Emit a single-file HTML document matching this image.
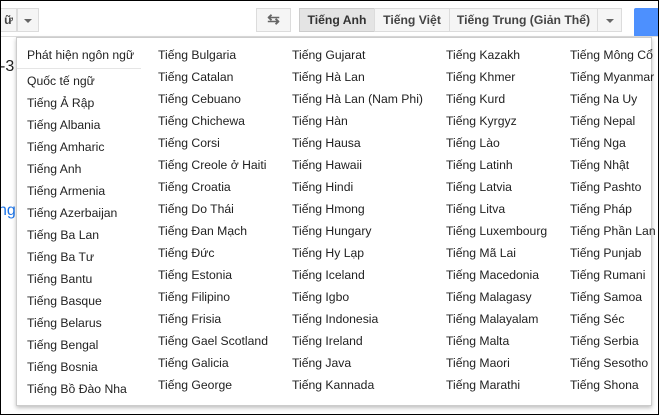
<!DOCTYPE html><html><head><style>
body{margin:0;width:659px;height:415px;overflow:hidden;background:#fff;font-family:"Liberation Sans",Arial,sans-serif;font-size:12.2px;color:#222;position:relative}
.frame{position:absolute;left:0;top:0;width:657px;height:413px;border:1px solid #000}
.btn{position:absolute;top:8px;height:24px;background:#f5f5f5;border:1px solid #dcdcdc;box-sizing:border-box;font-weight:bold;color:#444;line-height:22px;text-align:center}
.caret{display:inline-block;border-left:4px solid transparent;border-right:4px solid transparent;border-top:4px solid #666;vertical-align:middle}
.panel{position:absolute;left:16px;top:37px;width:636px;height:369px;background:#fff;border:1px solid #ccc;box-shadow:0 2px 4px rgba(0,0,0,.25);box-sizing:border-box}
.i{position:absolute;white-space:nowrap}
</style></head><body>
<div class="btn" style="left:-1px;width:18px;text-align:right;padding-right:3px">ữ</div>
<div class="btn" style="left:17px;width:22px"><span class="caret"></span></div>
<div class="btn" style="left:256px;width:35px;font-size:15px;color:#666">⇆</div>
<div class="btn" style="left:299px;width:76px;background:#e4e4e4;border-color:#ccc;color:#333">Tiếng Anh</div>
<div class="btn" style="left:374px;width:76px">Tiếng Việt</div>
<div class="btn" style="left:449px;width:149px">Tiếng Trung (Giản Thể)</div>
<div class="btn" style="left:597px;width:25px"><span class="caret"></span></div>
<div style="position:absolute;left:634px;top:8px;width:30px;height:29px;background:#4d90fe;border-radius:2px"></div>
<div style="position:absolute;left:0;top:36px;width:659px;border-top:1px solid #ddd"></div>
<div class="i" style="left:0;top:58px;font-size:16px;color:#222">-3</div>
<div class="i" style="left:-2px;top:202px;font-size:16px;color:#1a73e8">ng</div>
<div class="panel"></div>
<div style="position:absolute;left:17px;top:68px;width:124px;border-top:1px solid #e5e5e5"></div>
<div id="c"></div>
<script>
const cols=[[27,["Quốc tế ngữ","Tiếng Ả Rập","Tiếng Albania","Tiếng Amharic","Tiếng Anh","Tiếng Armenia","Tiếng Azerbaijan","Tiếng Ba Lan","Tiếng Ba Tư","Tiếng Bantu","Tiếng Basque","Tiếng Belarus","Tiếng Bengal","Tiếng Bosnia","Tiếng Bồ Đào Nha"],74],
[158,["Tiếng Bulgaria","Tiếng Catalan","Tiếng Cebuano","Tiếng Chichewa","Tiếng Corsi","Tiếng Creole ở Haiti","Tiếng Croatia","Tiếng Do Thái","Tiếng Đan Mạch","Tiếng Đức","Tiếng Estonia","Tiếng Filipino","Tiếng Frisia","Tiếng Gael Scotland","Tiếng Galicia","Tiếng George"],48],
[292,["Tiếng Gujarat","Tiếng Hà Lan","Tiếng Hà Lan (Nam Phi)","Tiếng Hàn","Tiếng Hausa","Tiếng Hawaii","Tiếng Hindi","Tiếng Hmong","Tiếng Hungary","Tiếng Hy Lạp","Tiếng Iceland","Tiếng Igbo","Tiếng Indonesia","Tiếng Ireland","Tiếng Java","Tiếng Kannada"],48],
[446,["Tiếng Kazakh","Tiếng Khmer","Tiếng Kurd","Tiếng Kyrgyz","Tiếng Lào","Tiếng Latinh","Tiếng Latvia","Tiếng Litva","Tiếng Luxembourg","Tiếng Mã Lai","Tiếng Macedonia","Tiếng Malagasy","Tiếng Malayalam","Tiếng Malta","Tiếng Maori","Tiếng Marathi"],48],
[570,["Tiếng Mông Cổ","Tiếng Myanmar","Tiếng Na Uy","Tiếng Nepal","Tiếng Nga","Tiếng Nhật","Tiếng Pashto","Tiếng Pháp","Tiếng Phần Lan","Tiếng Punjab","Tiếng Rumani","Tiếng Samoa","Tiếng Séc","Tiếng Serbia","Tiếng Sesotho","Tiếng Shona"],48]];
let h='<div class="i" style="left:27px;top:48px">Phát hiện ngôn ngữ</div>';
for(const [x,a,t] of cols)a.forEach((s,k)=>h+=`<div class="i" style="left:${x}px;top:${t+k*22}px">${s}</div>`);
document.getElementById('c').innerHTML=h;
</script>
<div class="frame"></div>
</body></html>
